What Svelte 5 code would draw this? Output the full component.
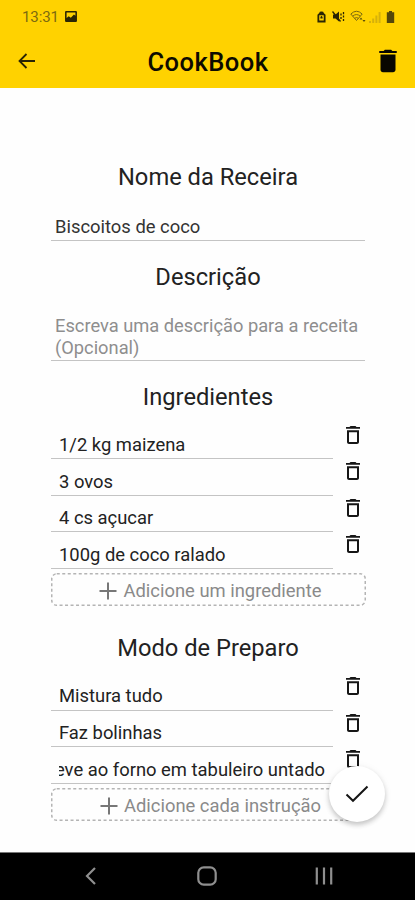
<script lang="ts">
  // Recipe edit screen: name, description, ingredients and preparation steps.

  interface Item {
    id: number;
    text: string;
  }

  let name = $state('Biscoitos de coco');
  let ingredients = $state<Item[]>([
    { id: 1, text: '1/2 kg maizena' },
    { id: 2, text: '3 ovos' },
    { id: 3, text: '4 cs açucar' },
    { id: 4, text: '100g de coco ralado' },
  ]);
  let steps = $state<Item[]>([
    { id: 1, text: 'Mistura tudo' },
    { id: 2, text: 'Faz bolinhas' },
    { id: 3, text: 'Leve ao forno em tabuleiro untado' },
  ]);

  function removeIngredient(id: number) {
    ingredients = ingredients.filter((i) => i.id !== id);
  }

  function removeStep(id: number) {
    steps = steps.filter((s) => s.id !== id);
  }

  function nextId(list: Item[]): number {
    return list.reduce((max, i) => Math.max(max, i.id), 0) + 1;
  }
</script>

{#snippet itemRow(item: Item, onremove: (id: number) => void)}
  <li class="row">
    <div class="row-field"><span class:long={item.text.length > 28}>{item.text}</span></div>
    <button class="icon-btn" aria-label="Remover" onclick={() => onremove(item.id)}>
      <svg width="24" height="24" viewBox="0 0 24 24">
        <path d="M6 19c0 1.1.9 2 2 2h8c1.1 0 2-.9 2-2V7.2H6V19zM8 9.2h8V19H8V9.2zM15.5 4l-1-1h-5l-1 1H5v1.8h14V4h-3.5z" />
      </svg>
    </button>
  </li>
{/snippet}

{#snippet addButton(label: string, onadd: () => void)}
  <button class="add" onclick={onadd}>
    <svg class="dash" width="315" height="33" aria-hidden="true">
      <rect x="0.75" y="0.75" width="313.5" height="31.5" rx="5" />
    </svg>
    <svg class="plus" width="18" height="18" viewBox="0 0 18 18">
      <path d="M9 0.5v17M0.5 9h17" />
    </svg>
    <span>{label}</span>
  </button>
{/snippet}

<div class="screen">
  <header>
    <div class="status">
      <span class="clock">13:31</span>
      <svg class="photo" width="12" height="11" viewBox="0 0 13 12">
        <path fill-rule="evenodd" d="M1.2 0h10.6Q13 0 13 1.2v9.6Q13 12 11.8 12H1.2Q0 12 0 10.8V1.2Q0 0 1.2 0zM1.7 1.5v6l2.3-1.7 2.3 1.6 3.4-3.6 1.6 1.5V1.5z" />
      </svg>
      <div class="status-icons">
        <svg width="9" height="12" viewBox="0 0 10 13">
          <path fill-rule="evenodd" d="M2.5 2Q2.500 0.500 5 0.500T7.500 2L9.500 4v8.500h-9V4zM2.500 4.500v6h5v-6zM5 5l1.200 1.500v1.800H3.800V6.500z" />
        </svg>
        <svg width="13" height="13" viewBox="0 0 13 13">
          <path d="M1 4.500h2.500L7 1.500v10L3.500 8.500H1z" />
          <path class="line" d="M0.500 1.500l8 10M9 3.500v2M9 7v2M11.500 2v2.200M11.500 5.500v2M11.500 9v2" />
        </svg>
        <svg class="dim" width="16" height="13" viewBox="0 0 16 13">
          <path class="line" d="M0.800 4Q6.500-1.500 12.200 4M2.700 6.200q3.800-3.300 7.600 0M4.600 8.300q1.900-1.500 3.800 0M0.800 4l5.700 6.500L12.200 4" />
          <path d="M9.500 9.500l1.500-2 1.500 2zM12.500 10h3L14 12z" />
        </svg>
        <svg class="signal" width="12" height="12" viewBox="0 0 12 12">
          <path d="M0 10h2v2H0zM3.200 7.500h2V12h-2zM6.400 4.500h2V12h-2zM9.600 1h2v11h-2z" />
        </svg>
        <svg class="battery" width="9" height="12" viewBox="0 0 9 12">
          <path d="M3 0h3v1.300h2.200V12H0.800V1.300H3z" />
        </svg>
      </div>
    </div>
    <div class="bar">
      <button class="back" aria-label="Voltar">
        <svg width="18" height="16" viewBox="0 0 18 16">
          <path d="M8.500 1L1.500 8l7 7M1.500 8H17" />
        </svg>
      </button>
      <h1>CookBook</h1>
      <button class="delete" aria-label="Excluir receita">
        <svg width="30" height="30" viewBox="0 0 24 24">
          <path d="M6 19c0 1.100.9 2 2 2h8c1.100 0 2-.9 2-2V6.700H6V19zM19 4h-3.500l-1-1h-5l-1 1H5v1.600h14V4z" />
        </svg>
      </button>
    </div>
  </header>

  <main>
    <h2>Nome da Receira</h2>
    <div class="field">{name}</div>

    <h2 class="desc-title">Descrição</h2>
    <div class="field area">Escreva uma descrição para a receita<br />(Opcional)</div>

    <h2 class="list-title">Ingredientes</h2>
    <ul>
      {#each ingredients as item (item.id)}
        {@render itemRow(item, removeIngredient)}
      {/each}
    </ul>
    {@render addButton('Adicione um ingrediente', () => ingredients.push({ id: nextId(ingredients), text: '' }))}

    <h2 class="steps-title">Modo de Preparo</h2>
    <ul>
      {#each steps as item (item.id)}
        {@render itemRow(item, removeStep)}
      {/each}
    </ul>
    {@render addButton('Adicione cada instrução', () => steps.push({ id: nextId(steps), text: '' }))}
  </main>

  <button class="fab" aria-label="Salvar">
    <svg width="24" height="18" viewBox="0 0 24 18">
      <path d="M1.500 9.500L8 15.800 22.500 1.500" />
    </svg>
  </button>

  <nav>
    <svg width="12" height="18" viewBox="0 0 12 18">
      <path d="M10 1L2 9l8 8" />
    </svg>
    <svg width="20" height="20" viewBox="0 0 20 20">
      <rect x="1.300" y="1.300" width="17.400" height="17.400" rx="5.500" />
    </svg>
    <svg width="18" height="18" viewBox="0 0 18 18">
      <path d="M1.800 0.500v17M9 0.500v17M16.200 0.500v17" />
    </svg>
  </nav>
</div>

<style>
  .screen {
    position: relative;
    display: flex;
    flex-direction: column;
    width: 415px;
    height: 900px;
    overflow: hidden;
    background: #fefefe;
    color: #222;
    font-family: Roboto, 'Liberation Sans', sans-serif;
  }
  svg {
    display: block;
  }
  button {
    display: flex;
    align-items: center;
    justify-content: center;
    margin: 0;
    padding: 0;
    border: 0;
    background: none;
    color: inherit;
    font-family: inherit;
    cursor: pointer;
  }
  header {
    flex: none;
    height: 88px;
    background: #ffd200;
  }
  .status {
    display: flex;
    align-items: center;
    height: 34px;
    padding: 0 20px 0 22px;
  }
  .clock {
    width: 37px;
    font-size: 15px;
    letter-spacing: -0.1px;
    color: #7c6a10;
  }
  .photo {
    margin: 0 0 1px 6px;
    fill: #2b2503;
  }
  .status-icons {
    display: flex;
    align-items: center;
    gap: 5px;
    margin: -1px 0 0 auto;
    fill: #2b2503;
  }
  .status-icons svg:first-child {
    margin-right: 1px;
  }
  .status-icons .line {
    fill: none;
    stroke: #2b2503;
    stroke-width: 1.3;
  }
  .status-icons .dim {
    margin-right: -2px;
    fill: #5a4c08;
  }
  .status-icons .dim .line {
    stroke: #7c6a10;
    stroke-width: 1;
  }
  .status-icons .signal {
    fill: #d6b10a;
  }
  .status-icons .battery {
    fill: #54470a;
  }
  .bar {
    display: flex;
    align-items: center;
    justify-content: space-between;
    height: 54px;
    padding: 0 12px 0 11px;
  }
  .back {
    width: 32px;
    height: 32px;
  }
  .back path {
    fill: none;
    stroke: #2b2503;
    stroke-width: 1.8;
  }
  .delete {
    width: 30px;
    height: 30px;
    fill: #080700;
  }
  h1 {
    margin: 2px 0 0;
    font-size: 25.5px;
    font-weight: 500;
    letter-spacing: 0.5px;
    line-height: 32px;
    color: #0d0b00;
  }
  main {
    flex: 1;
    padding: 74px 50px 0 51px;
  }
  h2 {
    margin: 0;
    font-size: 23.7px;
    font-weight: 400;
    line-height: 30px;
    text-align: center;
    color: #222;
  }
  .desc-title {
    margin-top: 21px;
  }
  .list-title {
    margin-top: 21px;
  }
  .steps-title {
    margin-top: 27px;
  }
  .field {
    margin-top: 16px;
    padding: 8px 4px 2px;
    border-bottom: 1px solid #c4c4c4;
    font-size: 18.4px;
    line-height: 22px;
    color: #333;
    white-space: nowrap;
  }
  .area {
    margin-top: 15px;
    padding-bottom: 1px;
    font-size: 18.3px;
    color: #8e8e8e;
  }
  ul {
    margin: 10.6px 0 0;
    padding: 0;
    list-style: none;
  }
  .row {
    display: flex;
    align-items: flex-start;
    height: 36.6px;
  }
  .row-field {
    box-sizing: border-box;
    width: 282px;
    height: 100%;
    padding: 11.4px 8px 0;
    border-bottom: 1px solid #c4c4c4;
    font-size: 18.4px;
    line-height: 22px;
    color: #222;
  }
  .row-field span {
    display: block;
    overflow: hidden;
    white-space: nowrap;
  }
  /* text wider than the field stays scrolled to its end */
  .row-field .long {
    display: flex;
    justify-content: flex-end;
  }
  .icon-btn {
    width: 24px;
    height: 24px;
    margin-left: 8px;
    fill: #161616;
  }
  .add {
    position: relative;
    width: 315px;
    height: 33px;
    margin-top: 4.4px;
    padding: 2px 0 0 4px;
    gap: 6px;
    font-size: 18.4px;
    color: #8a8a8a;
  }
  .dash {
    position: absolute;
    inset: 0;
  }
  .dash rect {
    fill: none;
    stroke: #b4b4b4;
    stroke-width: 1.5;
    stroke-dasharray: 3 2.5;
  }
  .plus path {
    stroke: #777;
    stroke-width: 2;
  }
  .fab {
    position: absolute;
    left: 329px;
    top: 766px;
    width: 56px;
    height: 56px;
    border-radius: 50%;
    background: #fff;
    box-shadow: 0 3px 5px rgba(0, 0, 0, 0.2), 0 1px 8px rgba(0, 0, 0, 0.06);
  }
  .fab path {
    fill: none;
    stroke: #151515;
    stroke-width: 2;
  }
  nav {
    box-sizing: border-box;
    flex: none;
    display: flex;
    align-items: center;
    justify-content: space-between;
    height: 48px;
    padding: 0 82px 1px 85px;
    border-top: 1px solid #777;
    background: #000;
  }
  nav svg:nth-child(2) {
    margin-left: 2px;
  }
  nav path,
  nav rect {
    fill: none;
    stroke: #8f8f8f;
    stroke-width: 2.2;
  }
</style>
